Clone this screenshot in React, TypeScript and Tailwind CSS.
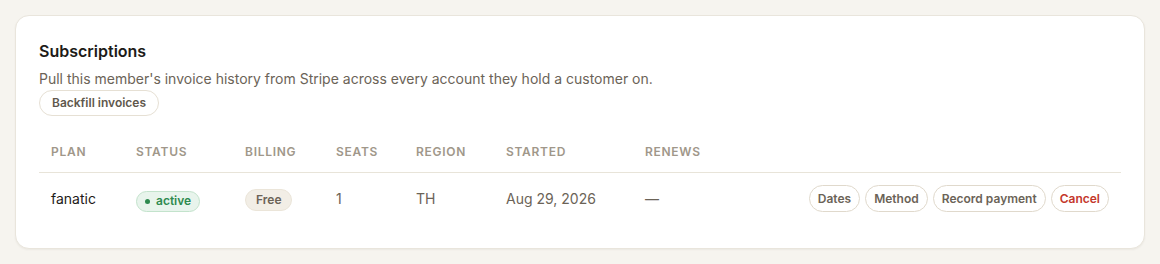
import React from "react";

type Sub = {
  plan: string;
  status: string;
  billing: string;
  seats: number;
  region: string;
  started: string;
  renews: string;
};

const rows: Sub[] = [
  {
    plan: "fanatic",
    status: "active",
    billing: "Free",
    seats: 1,
    region: "TH",
    started: "Aug 29, 2026",
    renews: "—",
  },
];

const headers = ["Plan", "Status", "Billing", "Seats", "Region", "Started", "Renews", ""];
const widths = ["w-[85px]", "w-[109px]", "w-[91px]", "w-[80px]", "w-[90px]", "w-[139px]", "w-[120px]", ""];

function ActionButton({ label, danger = false }: { label: string; danger?: boolean }) {
  return (
    <button
      className={`h-[27px] rounded-full border border-[#e0d9cc] bg-white px-[8px] text-[12px] font-semibold ${
        danger ? "text-[#c4372c]" : "text-[#6b6357]"
      }`}
    >
      {label}
    </button>
  );
}

export default function App() {
  return (
    <div className="min-h-[264px] bg-[#f6f4ef] p-[15px] font-['Inter',sans-serif] antialiased">
      <div className="rounded-[14px] border border-[#e9e5dc] bg-white px-[23px] pt-[23px] pb-[24px] shadow-[0_1px_2px_rgba(60,50,30,0.06)]">
        <h2 className="text-[16px] leading-6 font-semibold text-[#1d1b18]">Subscriptions</h2>
        <p className="mt-[6px] text-[14px] leading-5 text-[#6b6357]">
          Pull this member's invoice history from Stripe across every account they hold a customer on.
        </p>
        <button className="mt-[1px] h-[26px] rounded-full border border-[#e6e0d4] bg-white px-3 text-[12px] font-semibold text-[#5f584d]">
          Backfill invoices
        </button>

        <table className="mt-[16px] w-full table-fixed border-collapse">
          <thead>
            <tr className="border-b border-[#e8e4d9]">
              {headers.map((h, i) => (
                <th
                  key={i}
                  className={`${widths[i]} px-3 py-3 text-left text-[12px] leading-4 font-semibold tracking-[0.06em] text-[#a0978a] uppercase`}
                >
                  {h}
                </th>
              ))}
            </tr>
          </thead>
          <tbody>
            {rows.map((r) => (
              <tr key={r.plan}>
                <td className="px-3 py-[12px] text-[14px] text-[#1d1b18]">{r.plan}</td>
                <td className="px-3 py-[12px]">
                  <span className="inline-flex h-[21px] items-center gap-[6px] rounded-full border border-[#c3e3cc] bg-[#e8f4ec] px-[8px] text-[12px] font-semibold text-[#2e8a4f]">
                    <span className="h-[5px] w-[5px] rounded-full bg-[#2e8a4f]" />
                    {r.status}
                  </span>
                </td>
                <td className="px-3 py-[12px]">
                  <span className="inline-flex h-[22px] items-center rounded-full border border-[#ebe5d9] bg-[#f2eee6] px-[10px] text-[12px] font-semibold text-[#6b6357]">
                    {r.billing}
                  </span>
                </td>
                <td className="px-3 py-[12px] text-[14px] text-[#6b6357]">{r.seats}</td>
                <td className="px-3 py-[12px] text-[14px] text-[#6b6357]">{r.region}</td>
                <td className="px-3 py-[12px] text-[14px] text-[#6b6357]">{r.started}</td>
                <td className="px-3 py-[12px] text-[14px] text-[#6b6357]">{r.renews}</td>
                <td className="px-3 py-[12px]">
                  <div className="flex justify-end gap-[5px]">
                    <ActionButton label="Dates" />
                    <ActionButton label="Method" />
                    <ActionButton label="Record payment" />
                    <ActionButton label="Cancel" danger />
                  </div>
                </td>
              </tr>
            ))}
          </tbody>
        </table>
      </div>
    </div>
  );
}
